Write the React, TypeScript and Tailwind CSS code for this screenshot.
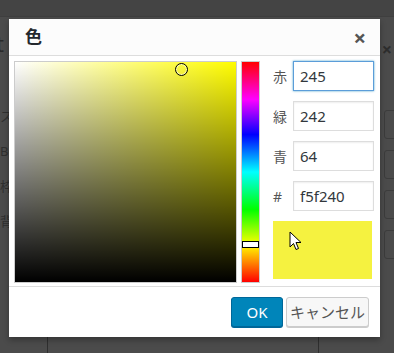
import { FC } from "react";

const font = { fontFamily: '"Noto Sans", "Noto Sans CJK JP", sans-serif' };

interface ChannelRowProps {
  label: string;
  value: string;
  focused?: boolean;
}

const ChannelRow: FC<ChannelRowProps> = ({ label, value, focused }) => (
  <div className="flex h-[30px] items-center">
    <div className="w-[20px] text-[14px] text-[#555]">{label}</div>
    <div
      className={
        focused
          ? "ml-auto flex h-[30px] w-[81px] items-center border border-[#5b9dd9] bg-white px-[6px] text-[15px] text-[#32373c] shadow-[0_0_2px_rgba(30,140,190,0.8)]"
          : "ml-auto flex h-[30px] w-[81px] items-center border border-[#ddd] bg-white px-[6px] text-[15px] text-[#32373c] shadow-[inset_0_1px_2px_rgba(0,0,0,0.07)]"
      }
    >
      {value}
    </div>
  </div>
);

const Cursor: FC = () => (
  <svg width="14" height="20" viewBox="0 0 14 20" className="absolute left-[16px] top-[10px]">
    <path d="M1 1 L1 16 L4.5 12.5 L7 18.5 L9.5 17.5 L7 11.5 L12 11.5 Z" fill="white" stroke="black" strokeWidth="1" strokeLinejoin="round" />
  </svg>
);

const App: FC = () => {
  return (
    <div className="relative h-[353px] w-[394px] overflow-hidden bg-[#4b4b4b]" style={font}>
      {/* page behind the overlay */}
      <div className="h-[17px] border-b border-[#3f3f3f] bg-[#444]" />
      <div className="absolute right-[2px] top-[40px] text-[18px] font-bold leading-none text-[#2d2d2d]">×</div>
      <div className="absolute left-[-4px] top-[32px] text-[22px] leading-none text-[#2a2a2a]">t</div>
      <div className="absolute left-[0px] top-[110px] flex flex-col gap-[22px] text-[13px] leading-none text-[#2f2f2f]">
        <span>ス</span>
        <span>Bo</span>
        <span>枠</span>
        <span>背</span>
      </div>
      <div className="absolute bottom-0 left-[47px] h-[16px] w-px bg-[#2f2f2f]" />
      <div className="absolute bottom-0 left-[318px] h-[16px] w-px bg-[#2f2f2f]" />
      <div className="absolute right-[-10px] top-[110px] flex flex-col gap-[11px]">
        <div className="h-[29px] w-[20px] rounded-[3px] border border-[#3c3c3c]" />
        <div className="h-[29px] w-[20px] rounded-[3px] border border-[#3c3c3c]" />
        <div className="h-[29px] w-[20px] rounded-[3px] border border-[#3c3c3c]" />
        <div className="h-[29px] w-[20px] rounded-[3px] border border-[#3c3c3c]" />
      </div>

      {/* dialog */}
      <div className="absolute left-[9px] top-[19px] flex h-[318px] w-[371px] flex-col bg-white shadow-[0_3px_6px_rgba(0,0,0,0.3)]">
        <div className="flex h-[37px] items-center border-b border-[#ddd] bg-[#fcfcfc] pl-[16px] pr-[14px]">
          <div className="text-[17px] font-bold text-[#23282d]">色</div>
          <div className="ml-auto text-[22px] font-bold leading-none text-[#555]">×</div>
        </div>

        <div className="flex h-[230px] gap-[4px] pl-[5px] pr-[6px] pt-[5px]">
          <div className="relative h-[222px] w-[227px] border border-[#ccc] bg-[#fffc00]">
            <div className="absolute inset-0 bg-gradient-to-r from-white to-transparent" />
            <div className="absolute inset-0 bg-gradient-to-t from-black to-transparent" />
            <div className="absolute left-[160px] top-[1px] h-[13px] w-[13px] rounded-full border border-black shadow-[inset_0_0_0_1px_rgba(255,255,255,0.6)]" />
          </div>

          <div className="relative h-[222px] w-[19px] border border-[#ccc] bg-[linear-gradient(to_bottom,#f00,#f0f_17%,#00f_33%,#0ff_50%,#0f0_67%,#ff0_83%,#f00)]">
            <div className="absolute left-0 right-0 top-[179px] h-[7px] border border-black bg-white" />
          </div>

          <div className="ml-[9px] flex flex-1 flex-col gap-[10px]">
            <ChannelRow label="赤" value="245" focused />
            <ChannelRow label="緑" value="242" />
            <ChannelRow label="青" value="64" />
            <ChannelRow label="#" value="f5f240" />
            <div className="relative h-[58px] w-[99px] bg-[#f5f240]">
              <Cursor />
            </div>
          </div>
        </div>

        <div className="flex flex-1 items-center justify-end gap-[3px] border-t border-[#ddd] pr-[11px]">
          <div className="flex h-[30px] w-[52px] items-center justify-center rounded-[3px] border border-[#006799] bg-[#0085ba] text-[15px] text-white shadow-[0_1px_0_#006799]">
            OK
          </div>
          <div className="flex h-[30px] w-[83px] items-center justify-center rounded-[3px] border border-[#ccc] bg-[#f7f7f7] text-[15px] text-[#555] shadow-[0_1px_0_#ccc]">
            キャンセル
          </div>
        </div>
      </div>
    </div>
  );
};

export default App;
